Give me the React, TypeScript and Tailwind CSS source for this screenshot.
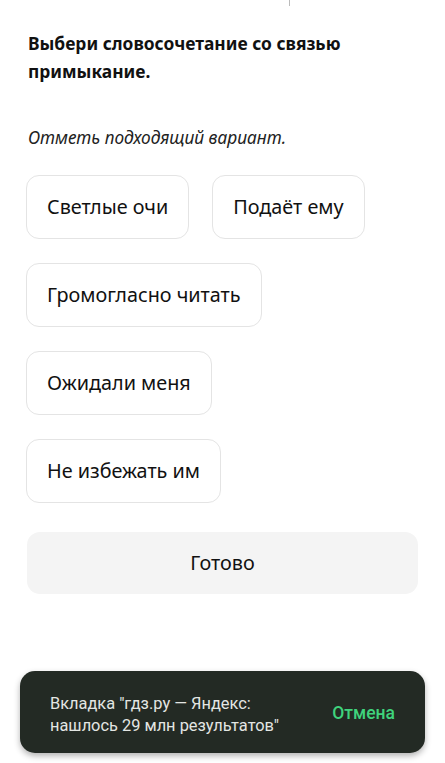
const options = [
  ["Светлые очи", "Подаёт ему"],
  ["Громогласно читать"],
  ["Ожидали меня"],
  ["Не избежать им"],
];

export default function App() {
  return (
    <div className="relative h-[763px] w-[445px] overflow-hidden bg-white font-['Noto_Sans',sans-serif] text-[#111]">
      <div className="absolute left-[289px] top-0 h-[6px] w-px bg-[#bbb]" />
      <div className="px-[28px] pt-[29px]">
        <h1 className="text-[17.4px] font-bold leading-[28px]">
          Выбери словосочетание со связью примыкание.
        </h1>
        <p className="mt-[42px] text-[17.3px] italic leading-[22px] text-[#222]">Отметь подходящий вариант.</p>
      </div>

      <div className="mt-[26px] flex flex-col gap-[24px] px-[26px]">
        {options.map((row, i) => (
          <div key={i} className="flex gap-[23px]">
            {row.map((label) => (
              <button
                key={label}
                type="button"
                className="h-[64px] rounded-[13px] border border-[#e4e4e4] bg-white px-[20px] text-[19.8px] text-[#111]"
              >
                {label}
              </button>
            ))}
          </div>
        ))}
      </div>

      <div className="mt-[29px] px-[27px]">
        <button type="button" className="h-[62px] w-full rounded-[13px] bg-[#f4f4f4] text-[19.8px] text-[#111]">
          Готово
        </button>
      </div>

      <div className="absolute bottom-[10px] left-[20px] right-[20px] flex h-[82px] items-center justify-between rounded-[15px] bg-[#232a24] pl-[30px] pr-[30px] font-['Roboto',sans-serif] shadow-[0_3px_6px_rgba(0,0,0,0.3)]">
        <p className="pt-[5px] text-[16.4px] leading-[22px] text-[#e3e6e3]">
          Вкладка "гдз.ру — Яндекс:
          <br />
          нашлось 29 млн результатов"
        </p>
        <span className="pt-[2px] text-[17.5px] font-medium text-[#3fd37c]">Отмена</span>
      </div>
    </div>
  );
}
